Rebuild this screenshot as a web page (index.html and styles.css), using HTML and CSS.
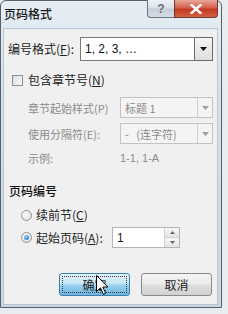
FILE: index.html
```html
<!DOCTYPE html>
<html lang="zh">
<head>
<meta charset="utf-8">
<link rel="stylesheet" href="styles.css">
</head>
<body>
<div class="window">
  <div class="titlebar">
    <div class="title">页码格式</div>
    <div class="caption-btns">
      <div class="cbtn help">?</div>
      <div class="cbtn close">
        <svg width="12" height="10" viewBox="0 0 12 10"><path d="M1.5 1 L10.5 9 M10.5 1 L1.5 9" stroke="#fff" stroke-width="2.4" stroke-linecap="square"/></svg>
      </div>
    </div>
  </div>
  <div class="client">
    <div class="row row-format">
      <span class="lbl w-format">编号格式(<u>F</u>):</span>
      <div class="combo combo-main">
        <span class="combo-text">1, 2, 3, …</span>
        <span class="drop">
          <svg width="7" height="4" viewBox="0 0 7 4"><path d="M0 0 H7 L3.5 4 Z" fill="#111"/></svg>
        </span>
      </div>
    </div>
    <div class="row row-check">
      <span class="checkbox"></span>
      <span class="lbl">包含章节号(<u>N</u>)</span>
    </div>
    <div class="row row-dis first-dis">
      <span class="lbl dis w-dis">章节起始样式(P)</span>
      <div class="combo combo-dis">
        <span class="combo-text">标题 1</span>
        <span class="drop drop-dis">
          <svg width="7" height="4" viewBox="0 0 7 4"><path d="M0 0 H7 L3.5 4 Z" fill="#a0a0a0"/></svg>
        </span>
      </div>
    </div>
    <div class="row row-dis second-dis">
      <span class="lbl dis w-dis">使用分隔符(E):</span>
      <div class="combo combo-dis">
        <span class="combo-text">-&nbsp;&nbsp;&nbsp;(连字符)</span>
        <span class="drop drop-dis">
          <svg width="7" height="4" viewBox="0 0 7 4"><path d="M0 0 H7 L3.5 4 Z" fill="#a0a0a0"/></svg>
        </span>
      </div>
    </div>
    <div class="row row-example">
      <span class="lbl dis w-dis">示例:</span>
      <span class="lbl dis ex-val">1-1, 1-A</span>
    </div>
    <div class="row row-heading">
      <span class="lbl heading">页码编号</span>
    </div>
    <div class="row row-radio1">
      <span class="radio"></span>
      <span class="lbl">续前节(<u>C</u>)</span>
    </div>
    <div class="row row-radio2">
      <span class="radio checked"><span class="dot"></span></span>
      <span class="lbl w-start">起始页码(<u>A</u>):</span>
      <div class="spin">
        <span class="spin-text">1</span>
        <span class="spin-btns">
          <span class="sb"><svg width="5" height="3" viewBox="0 0 5 3"><path d="M0 3 H5 L2.5 0 Z" fill="#666"/></svg></span>
          <span class="sb"><svg width="5" height="3" viewBox="0 0 5 3"><path d="M0 0 H5 L2.5 3 Z" fill="#666"/></svg></span>
        </span>
      </div>
    </div>
    <div class="row row-buttons">
      <div class="btn ok"><span class="focus">确定</span></div>
      <div class="btn cancel">取消</div>
    </div>
    <svg class="cursor" width="13" height="21" viewBox="0 0 13 21">
      <path d="M0.5 0.5 L0.5 16.5 L4.5 12.8 L7.3 19.3 L9.6 18.3 L6.9 12 L11.8 12 Z" fill="#fff" stroke="#000" stroke-width="1" stroke-linejoin="miter"/>
    </svg>
  </div>
</div>
</body>
</html>
```

FILE: styles.css
```css
html, body {
  margin: 0;
  padding: 0;
}
body {
  width: 228px;
  height: 314px;
  background: #e9ecef;
  font-family: "Noto Sans CJK SC", "Liberation Sans", sans-serif;
  font-size: 12px;
  color: #1e1e1e;
  overflow: hidden;
}
u { text-decoration: underline; text-underline-offset: 1px; }

.window {
  box-sizing: border-box;
  width: 222px;
  height: 308px;
  border: 1px solid #56606b;
  border-radius: 6px 6px 0 0;
  background: linear-gradient(180deg, #e6edf4 0%, #d6e1ec 30%, #c8d7e5 100%);
  display: flex;
  flex-direction: column;
  padding: 0 3px 2px 2px;
}

.titlebar {
  height: 27px;
  display: flex;
  justify-content: space-between;
  align-items: flex-start;
}
.title {
  margin-top: 5px;
  margin-left: 1px;
  font-size: 12px;
  font-weight: 500;
  color: #1a1a1a;
  line-height: 16px;
}
.caption-btns {
  display: flex;
  margin-top: -1px;
}
.cbtn {
  height: 18px;
  box-sizing: border-box;
  border: 1px solid #6b7580;
  border-top: none;
  display: flex;
  align-items: center;
  justify-content: center;
}
.help {
  width: 27px;
  border-radius: 0 0 0 4px;
  border-right: none;
  background: linear-gradient(180deg, #eef2f6 0%, #d9e1e9 48%, #c5ced8 52%, #d4dce4 100%);
  color: #6b6f74;
  font-family: "Liberation Sans", sans-serif;
  font-weight: bold;
  font-size: 12px;
}
.close {
  width: 44px;
  border-radius: 0 0 4px 0;
  background: linear-gradient(180deg, #e4a797 0%, #d7604b 45%, #c43a24 55%, #d2603f 100%);
  border-color: #6d3a33;
}

.client {
  position: relative;
  flex: 1;
  background: #f0f0f0;
  border: 1px solid #b9c6d3;
  box-sizing: border-box;
  padding-left: 4px;
  display: flex;
  flex-direction: column;
}

.row {
  display: flex;
  align-items: center;
  flex-shrink: 0;
}
.lbl { white-space: nowrap; line-height: 16px; }
.dis { color: #8b8b8b; font-size: 11px; }

.row-format { margin-top: 8px; height: 24px; }
.w-format { width: 72px; }
.combo {
  box-sizing: border-box;
  display: flex;
  align-items: stretch;
  background: #fff;
}
.combo-main {
  width: 133px;
  height: 24px;
  border: 1px solid #7a7a7a;
  border-right: none;
}
.combo-text { flex: 1; padding-left: 4px; display: flex; align-items: center; }
.combo-main .combo-text { font-family: "Liberation Sans", sans-serif; font-size: 12px; color: #111; }
.drop {
  width: 17px;
  border: 1px solid #6a6a6a;
  margin: -1px 0;
  display: flex;
  align-items: center;
  justify-content: center;
  background: linear-gradient(180deg, #f6f6f6, #dedede);
}

.row-check { margin-top: 11px; height: 16px; }
.checkbox {
  width: 11px;
  height: 11px;
  box-sizing: border-box;
  border: 1px solid #8e8f8f;
  background: linear-gradient(135deg, #dcdcdc, #fbfbfb);
  margin-left: 4px;
  margin-right: 5px;
}

.row-dis { height: 21px; }
.first-dis { margin-top: 9px; }
.second-dis { margin-top: 5px; }
.w-dis { width: 92px; margin-left: 20px; }
.combo-dis {
  width: 93px;
  height: 21px;
  border: 1px solid #c3c3c3;
  background: #f4f4f4;
}
.combo-dis .combo-text { color: #8b8b8b; font-size: 11px; padding-left: 4px; }
.drop-dis {
  width: 14px;
  margin: 0;
  border: none;
  border-left: 1px solid #cfcfcf;
  background: #f4f4f4;
}

.row-example { margin-top: 6px; height: 16px; }
.ex-val { font-family: "Liberation Sans", sans-serif; font-size: 11px; }

.row-heading { margin-top: 17px; height: 16px; }
.heading { color: #111; font-weight: 500; margin-left: 1px; }

.radio {
  width: 11px;
  height: 11px;
  box-sizing: border-box;
  border-radius: 50%;
  border: 1px solid #939393;
  background: radial-gradient(circle at 40% 40%, #fdfdfd, #d6d6d6);
  margin-left: 13px;
  margin-right: 4px;
  display: flex;
  align-items: center;
  justify-content: center;
}
.radio .dot {
  width: 5px;
  height: 5px;
  border-radius: 50%;
  background: radial-gradient(circle at 35% 35%, #8fd0ff, #1b64b8);
}
.row-radio1 { margin-top: 8px; height: 16px; }
.row-radio2 { margin-top: 4px; height: 21px; }
.w-start { width: 76px; }
.spin {
  box-sizing: border-box;
  width: 68px;
  height: 21px;
  border: 1px solid #b1b5ba;
  background: #fff;
  display: flex;
}
.spin-text { flex: 1; padding-left: 4px; font-family: "Liberation Sans", sans-serif; font-size: 12px; display: flex; align-items: center; }
.spin-btns { width: 14px; display: flex; flex-direction: column; border-left: 1px solid #d0d0d0; }
.sb {
  flex: 1;
  display: flex;
  align-items: center;
  justify-content: center;
  background: linear-gradient(180deg, #f7f7f7, #e4e4e4);
}
.sb + .sb { border-top: 1px solid #d0d0d0; }

.row-buttons {
  margin-top: 25px;
  height: 23px;
  justify-content: flex-end;
  gap: 11px;
  padding-right: 5px;
}
.btn {
  box-sizing: border-box;
  width: 71px;
  height: 23px;
  border-radius: 3px;
  display: flex;
  align-items: center;
  justify-content: center;
  font-size: 12px;
}
.ok {
  border: 1px solid #3c7fb1;
  background: linear-gradient(180deg, #e5f4fc 0%, #c4e5f6 45%, #98d1ef 55%, #6cb6e0 100%);
  padding: 2px;
}
.ok .focus {
  flex: 1;
  align-self: stretch;
  border: 1px dotted #3a3a3a;
  display: flex;
  align-items: center;
  justify-content: center;
  color: #222;
}
.cancel {
  border: 1px solid #8a8a8a;
  background: linear-gradient(180deg, #f4f4f4 0%, #ececec 45%, #dedede 55%, #d2d2d2 100%);
  color: #222;
}

.cursor {
  position: absolute;
  left: 92px;
  top: 246px;
}
```
